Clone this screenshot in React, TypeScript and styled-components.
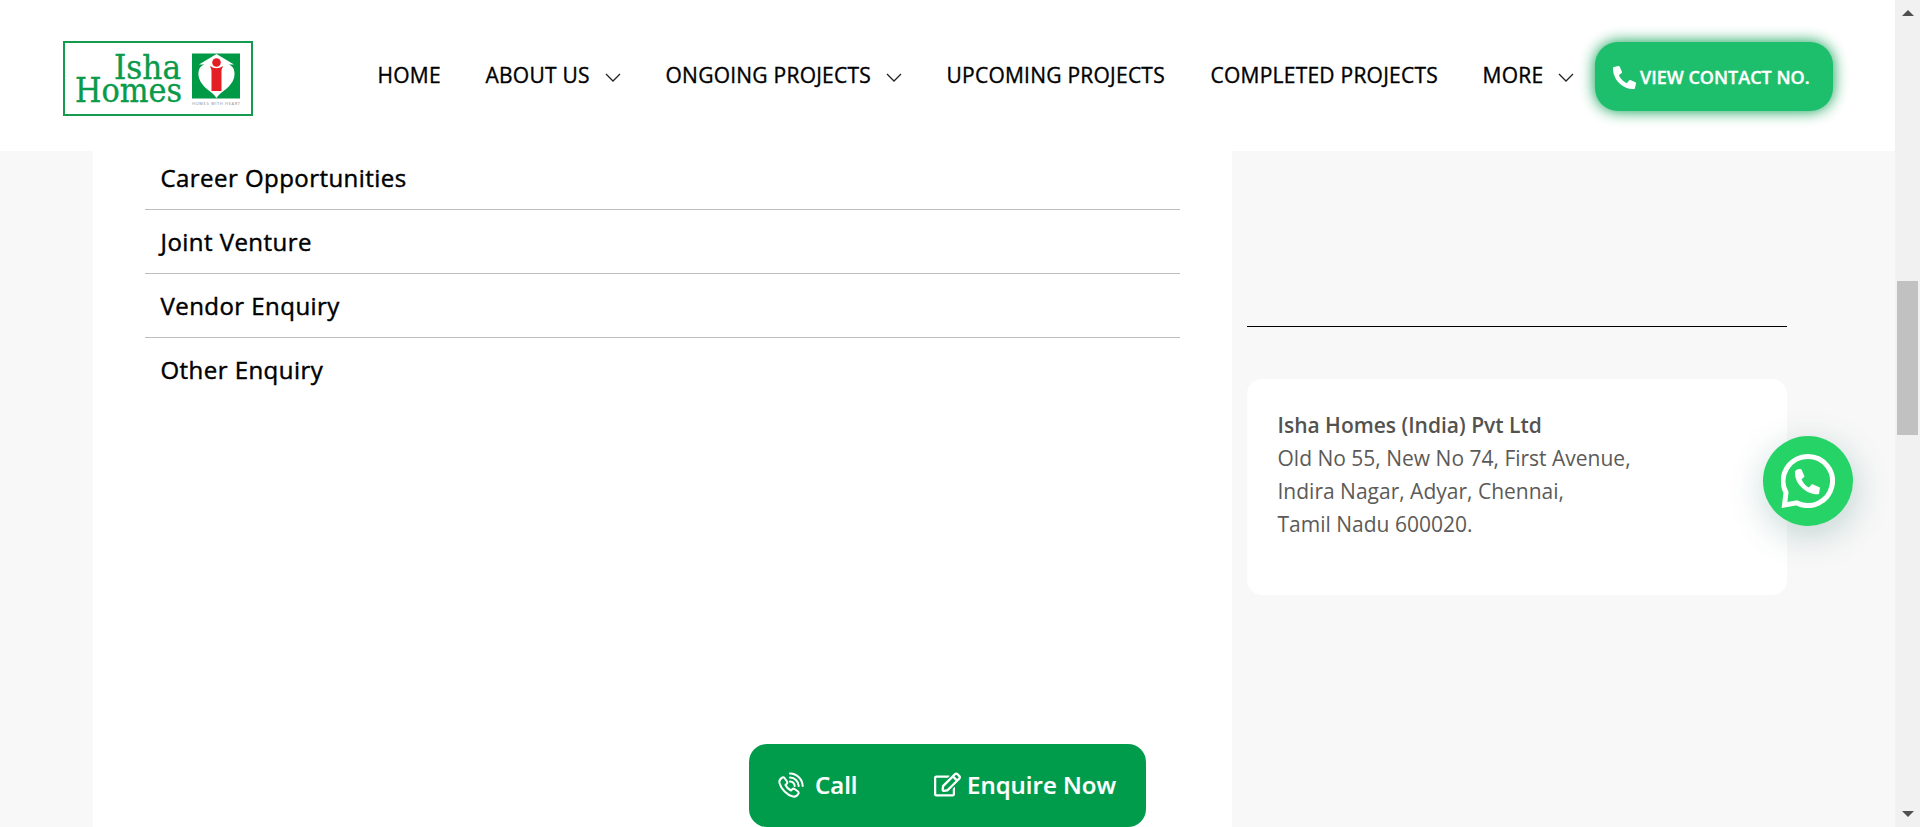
import React from "react";
import styled, { createGlobalStyle } from "styled-components";
import { FaPhoneAlt, FaRegEdit } from "react-icons/fa";

const GlobalStyle = createGlobalStyle`
  * { box-sizing: border-box; }
  body { margin: 0; overflow: hidden; background: #f8f8f8; font-family: "Open Sans", sans-serif; color: #000; }
`;

const Page = styled.div`
  display: grid;
  grid-template-columns: 1fr 25px;
  height: 827px;
`;

const Site = styled.div`
  display: flex;
  flex-direction: column;
  position: relative;
  background: #f8f8f8;
  overflow: hidden;
`;

const Header = styled.header`
  display: flex;
  align-items: flex-start;
  height: 151px;
  flex: none;
  background: #fff;
  padding: 41px 62px 0 63px;
`;

const Logo = styled.svg`
  flex: none;
  width: 190px;
  height: 75px;
`;

const Nav = styled.nav`
  display: flex;
  gap: 45px;
  margin: 17px 0 0 124.5px;
`;

const NavLink = styled.a<{ $w: number }>`
  display: flex;
  align-items: center;
  justify-content: space-between;
  width: ${(p) => p.$w}px;
  height: 34px;
  font-size: 21px;
  font-weight: 500;
  letter-spacing: 0.24px;
  -webkit-text-stroke: 0.35px #000;
  white-space: nowrap;
  color: #000;
`;

const Chevron = styled.svg`
  width: 16px;
  height: 9px;
  margin-top: 5px;
  fill: none;
  stroke: #222;
  stroke-width: 1.3;
`;

const ContactButton = styled.button`
  display: flex;
  align-items: center;
  gap: 4px;
  width: 238px;
  height: 69px;
  margin: 1px 0 0 auto;
  padding: 2px 0 0 18px;
  border: 0;
  border-radius: 23px;
  background: #1dbf6d;
  box-shadow: 0 0 15px #009c4c;
  color: #fff;
  font: 600 18px "Open Sans", sans-serif;
  -webkit-text-stroke: 0.35px #fff;
  white-space: nowrap;
`;

const ContactLabel = styled.span`
  padding-bottom: 2px;
`;

const Main = styled.main`
  display: flex;
  flex: 1;
  padding-left: 93px;
`;

const Enquiries = styled.section`
  width: 1139px;
  padding: 0 52px;
  background: #fff;
`;

const EnquiryRow = styled.div<{ $first?: boolean; $last?: boolean }>`
  height: ${(p) => (p.$first ? 59 : 64)}px;
  padding: ${(p) => (p.$first ? 9 : 14)}px 15px 0 15.5px;
  border-bottom: ${(p) => (p.$last ? "0" : "1px solid #bdbdbd")};
  font-size: 24px;
  font-weight: 500;
  line-height: 36px;
  letter-spacing: 0.45px;
  -webkit-text-stroke: 0.45px #000;
`;

const Aside = styled.aside`
  width: 555px;
  padding: 175px 0 0 15px;
`;

const Divider = styled.hr`
  height: 1px;
  margin: 0 0 52px;
  border: 0;
  background: #000;
`;

const AddressCard = styled.address`
  height: 216px;
  padding: 30px 30px 30px 30.5px;
  border-radius: 15px;
  background: #fff;
  color: #5c5a57;
  font-size: 21px;
  font-style: normal;
  line-height: 33px;
`;

const Company = styled.strong`
  display: block;
  color: #54524f;
  font-weight: 600;
`;

const ActionBar = styled.div`
  position: absolute;
  left: 749px;
  bottom: 0;
  display: flex;
  align-items: center;
  width: 397px;
  height: 83px;
  padding: 0 30px 2px 29px;
  border-radius: 18px;
  background: #009c4c;
`;

const Action = styled.a<{ $gap: number; $push?: boolean }>`
  display: flex;
  align-items: center;
  gap: ${(p) => p.$gap}px;
  margin-left: ${(p) => (p.$push ? "auto" : "0")};
  color: #fff;
  font-size: 24px;
  font-weight: 600;
  -webkit-text-stroke: 0.2px #fff;
  white-space: nowrap;
`;

const CallIcon = styled.svg`
  width: 26px;
  height: 26px;
  fill: none;
  stroke: #fff;
  stroke-width: 2;
  stroke-linecap: round;
  stroke-linejoin: round;
`;

const ChatBubble = styled.a`
  position: absolute;
  left: 1763px;
  top: 436px;
  display: flex;
  align-items: center;
  justify-content: center;
  width: 90px;
  height: 90px;
  border-radius: 50%;
  background: #25d366;
  box-shadow: 1.5px 9px 36px rgba(7, 94, 84, 0.24);
`;

const Scrollbar = styled.div`
  display: flex;
  flex-direction: column;
  align-items: center;
  background: #f1f1f1;
`;

const Arrow = styled.svg`
  width: 12px;
  height: 6px;
  flex: none;
  margin: 10px 0;
  fill: #505050;
`;

const Thumb = styled.div`
  width: 21px;
  height: 154px;
  margin: 255px 0 auto;
  background: #c1c1c1;
`;

const navItems = [
  { label: "HOME", width: 63 },
  { label: "ABOUT US", width: 135, menu: true },
  { label: "ONGOING PROJECTS", width: 236, menu: true },
  { label: "UPCOMING PROJECTS", width: 219 },
  { label: "COMPLETED PROJECTS", width: 227 },
  { label: "MORE", width: 91, menu: true },
];

const enquiries = ["Career Opportunities", "Joint Venture", "Vendor Enquiry", "Other Enquiry"];

function IshaLogo() {
  return (
    <Logo viewBox="0 0 190 75">
      <rect x="1" y="1" width="188" height="73" fill="#fff" stroke="#159b4e" strokeWidth="2" />
      <g fill="#0a9a4a" stroke="#0a9a4a" strokeWidth="0.35" fontFamily="DejaVu Serif Condensed, DejaVu Serif, serif" fontSize="34">
        <text x="51" y="37.500" textLength="67" lengthAdjust="spacingAndGlyphs">Isha</text>
        <text x="12" y="60.500" textLength="107" lengthAdjust="spacingAndGlyphs">Homes</text>
      </g>
      <rect x="129" y="12.500" width="48" height="45" fill="#009a46" />
      <path d="M153.500 13 L171 23.500 H165.500 C171 25 172.500 31 171 37 C168 47 158 50 153.500 57 C149 50 139 47 136 37 C134.500 31 136 25 141.500 23.500 H136 Z" fill="#fff" />
      <circle cx="153.500" cy="21.500" r="4.300" fill="#e31e24" />
      <path d="M147 25 Q153.500 29.500 160 25 L158.500 29 V50 H148.500 V29 Z" fill="#e31e24" />
      <text x="129" y="63.500" fontFamily="Open Sans, sans-serif" fontSize="4" fill="#888" textLength="48">HOMES WITH HEART</text>
    </Logo>
  );
}

export default function App() {
  return (
    <Page>
      <GlobalStyle />
      <Site>
        <Header>
          <IshaLogo />
          <Nav>
            {navItems.map((item) => (
              <NavLink key={item.label} $w={item.width}>
                {item.label}
                {item.menu && (
                  <Chevron viewBox="0 0 16 9"><path d="M1 1l7 7 7-7" /></Chevron>
                )}
              </NavLink>
            ))}
          </Nav>
          <ContactButton><FaPhoneAlt size={23} /><ContactLabel>VIEW CONTACT NO.</ContactLabel></ContactButton>
        </Header>
        <Main>
          <Enquiries>
            {enquiries.map((name, i) => (
              <EnquiryRow key={name} $first={i === 0} $last={i === enquiries.length - 1}>{name}</EnquiryRow>
            ))}
          </Enquiries>
          <Aside>
            <Divider />
            <AddressCard>
              <Company>Isha Homes (India) Pvt Ltd</Company>
              Old No 55, New No 74, First Avenue,<br />
              Indira Nagar, Adyar, Chennai,<br />
              Tamil Nadu 600020.
            </AddressCard>
          </Aside>
        </Main>
        <ActionBar>
          <Action $gap={11}>
            <CallIcon viewBox="0 0 26 26">
              <path d="M4.500 5.500C2.500 6.500 1 8.500 1.500 11C3 17 9 23 15 24.500C17.500 25 19.500 23.500 20.500 21.500Q21 20.300 20 19.500L16.500 17Q15.300 16.200 14.300 17.200L13 18.500C10.800 17.500 8.500 15.200 7.500 13L8.800 11.700Q9.800 10.700 9 9.500L6.500 6Q5.700 5 4.500 5.500Z" />
              <path d="M12 1.500A13 13 0 0 1 24.700 14M12 5.500A9 9 0 0 1 20.700 14M12 9.500A5 5 0 0 1 16.700 14" />
            </CallIcon>
            Call
          </Action>
          <Action $gap={6} $push><FaRegEdit size={27} />Enquire Now</Action>
        </ActionBar>
        <ChatBubble>
          <svg width="54" height="54" viewBox="0 0 54 54">
            <path d="M27 2.500a24.500 24.500 0 1 1-11 46.400L3.500 51 5 38.500A24.500 24.500 0 0 1 27 2.500Z" fill="none" stroke="#fff" strokeWidth="5" />
            <path d="M14 17.500c1-2 4-3 6.500-2l3 7-3 3c2 4 5 7 7.500 8l3-3.500 8 3.500-1 6.500c-9 2-25-8-24-22.500Z" fill="#fff" />
          </svg>
        </ChatBubble>
      </Site>
      <Scrollbar>
        <Arrow viewBox="0 0 12 6"><path d="M6 0l6 6H0Z" /></Arrow>
        <Thumb />
        <Arrow viewBox="0 0 12 6"><path d="M0 0h12L6 6Z" /></Arrow>
      </Scrollbar>
    </Page>
  );
}
